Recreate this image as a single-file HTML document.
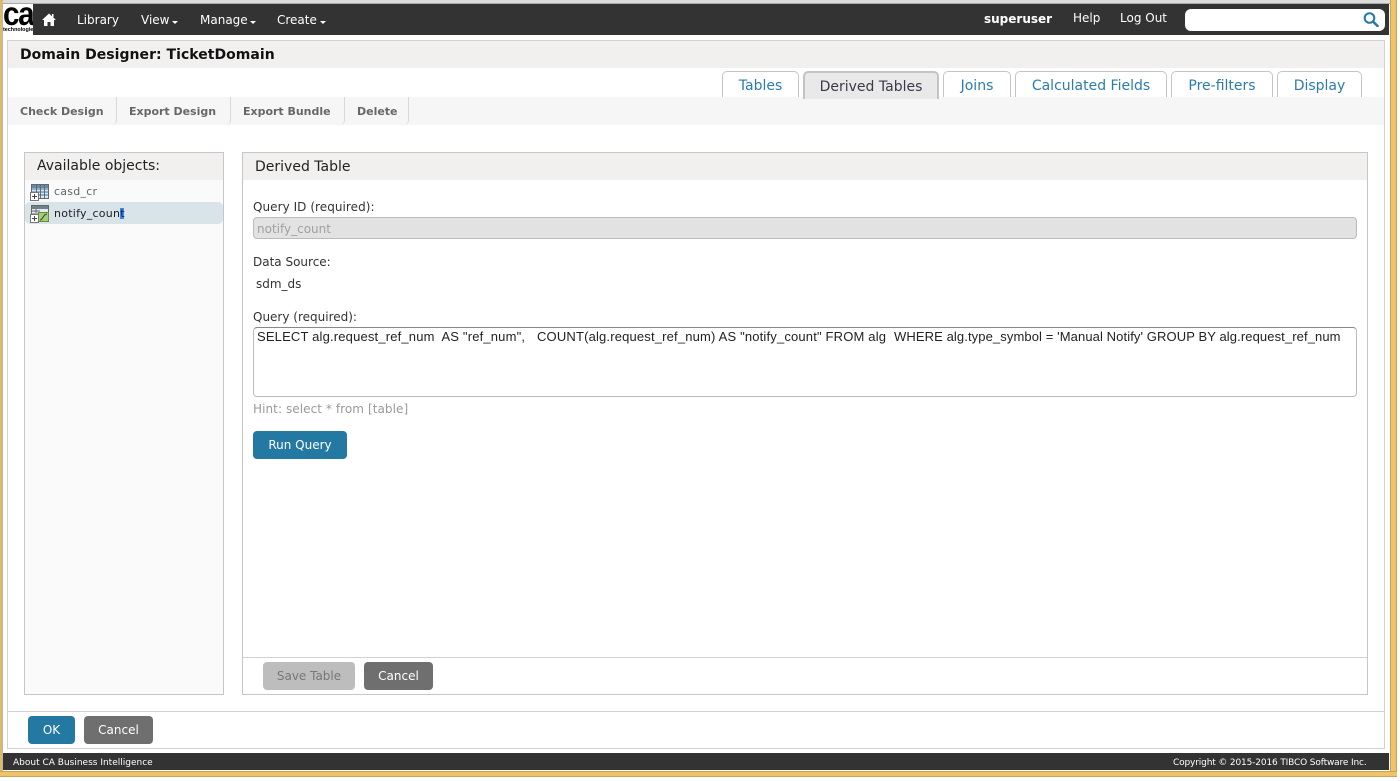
<!DOCTYPE html>
<html><head><meta charset="utf-8"><title>Domain Designer</title>
<style>
html,body{margin:0;padding:0;background:#fff}
#p{position:relative;width:1400px;height:781px;overflow:hidden;background:#fff;font-family:"Liberation Sans",sans-serif}
#p div,#p span.t{position:absolute;box-sizing:border-box}
.t{position:absolute;white-space:pre;line-height:16px}
.n{color:#fff;top:12px;font-family:"DejaVu Sans",sans-serif;font-size:12px}
.v{font-family:"DejaVu Sans",sans-serif}
.tab{top:71px;height:26px;background:#fff;border:1px solid #c4c4c4;border-bottom:0;border-radius:5px 5px 0 0;color:#2b7cab;font:14px/28px "DejaVu Sans",sans-serif;text-align:center;white-space:pre}
.tb{top:97px;height:28px;border-right:1px solid #d8d8d8;border-radius:0 0 5px 0}
.tbt{top:104px;color:#6b6666;font:bold 11px/16px "DejaVu Sans",sans-serif;letter-spacing:-.01px}
.lb{color:#333;font:12px/16px "DejaVu Sans",sans-serif}
.q{top:329px;font-size:13px;letter-spacing:.17px;color:#222}
.btn{height:28px;border-radius:4px;color:#fff;font:12px/28px "DejaVu Sans",sans-serif;text-align:center}
.arr{width:0;height:0;border:3px solid transparent;border-top:3px solid #fff;border-bottom:0}
</style></head><body><div id="p">
<!-- window frame -->
<div style="left:0;top:0;width:3px;height:772px;background:#e2b862"></div>
<div style="left:2px;top:3px;width:1px;height:768px;background:#b8b8b8"></div>
<div style="left:1390px;top:0;width:7px;height:777px;background:#efc369;border-left:1px solid #c9a458;border-right:1px solid #c9a458"></div>
<div style="left:0;top:771px;width:1397px;height:6px;background:#efc369;border-top:1px solid #c9a458;border-bottom:1px solid #c9a458"></div>
<div style="left:3px;top:0;width:1387px;height:4px;background:#dcdcdc;border-bottom:1px solid #aaa"></div>
<!-- top bar -->
<div style="left:33px;top:4px;width:1356px;height:31px;background:#333"></div>
<div style="left:3px;top:4px;width:30px;height:31px;background:#fff;overflow:hidden">
<span class="t" style="left:0;top:-5px;font:bold 33px/30px 'Liberation Sans',sans-serif;letter-spacing:-1.500px;color:#000;transform:scaleX(.9);transform-origin:0 0">ca</span>
<span class="t" style="left:0;top:22px;font:bold 5.400px/8px 'Liberation Sans',sans-serif;color:#000">technologies</span>
</div>
<svg style="position:absolute;left:42px;top:13px" width="14" height="13" viewBox="0 0 14 13"><path d="M7 0.5L0 7h2v6h3.5V9h3v4H12V7h2L11.5 4.7V1H10v2.3z" fill="#fff"/></svg>
<span class="t n" style="left:77px">Library</span>
<span class="t n" style="left:141px">View</span><div class="arr" style="left:172px;top:21px"></div>
<span class="t n" style="left:200px">Manage</span><div class="arr" style="left:250px;top:21px"></div>
<span class="t n" style="left:277px">Create</span><div class="arr" style="left:320px;top:21px"></div>
<span class="t" style="left:984px;top:11px;color:#fff;font:bold 12px/16px 'DejaVu Sans',sans-serif">superuser</span>
<span class="t n" style="left:1073px;top:10px">Help</span>
<span class="t n" style="left:1120px;top:10px">Log Out</span>
<div style="left:1185px;top:9px;width:200px;height:22px;background:#fff;border-radius:6px"></div>
<svg style="position:absolute;left:1363px;top:12px" width="16" height="15" viewBox="0 0 16 15"><circle cx="6.500" cy="6" r="4.800" fill="none" stroke="#2479a8" stroke-width="2"/><path d="M10 9.500L14.500 14" stroke="#2479a8" stroke-width="2.600" stroke-linecap="round"/></svg>
<!-- main panel -->
<div style="left:7px;top:40px;width:1378px;height:709px;border:1px solid #d2d2d2;background:#fff"></div>
<div style="left:8px;top:41px;width:1376px;height:27px;background:#f1f0ef"></div>
<span class="t" style="left:20px;top:47px;color:#111;font:bold 14px/16px 'DejaVu Sans',sans-serif;letter-spacing:.03px">Domain Designer: TicketDomain</span>
<!-- toolbar -->
<div style="left:8px;top:97px;width:1376px;height:28px;background:#f6f6f6"></div>
<div class="tb" style="left:8px;width:109px"></div>
<div class="tb" style="left:117px;width:114px"></div>
<div class="tb" style="left:231px;width:114px"></div>
<div class="tb" style="left:345px;width:64px"></div>
<span class="t tbt" style="left:20px">Check Design</span>
<span class="t tbt" style="left:129px">Export Design</span>
<span class="t tbt" style="left:243px">Export Bundle</span>
<span class="t tbt" style="left:357px">Delete</span>
<!-- tabs -->
<div class="tab" style="left:722px;width:77px">Tables</div>
<div class="tab" style="left:803px;width:136px;height:28px;background:#e9e9e9;border:2px solid #c4c4c4;border-bottom:0;color:#3a3a4a;line-height:28px">Derived Tables</div>
<div class="tab" style="left:943px;width:68px">Joins</div>
<div class="tab" style="left:1015px;width:152px">Calculated Fields</div>
<div class="tab" style="left:1171px;width:102px">Pre-filters</div>
<div class="tab" style="left:1277px;width:85px">Display</div>
<!-- left panel -->
<div style="left:24px;top:152px;width:200px;height:543px;border:1px solid #c6c6c6;background:#fafafa"></div>
<div style="left:25px;top:153px;width:198px;height:27px;background:#f1f0ef"></div>
<span class="t v" style="left:37px;top:158px;font-size:14px;color:#222">Available objects:</span>
<svg style="position:absolute;left:30px;top:184px" width="19" height="17" viewBox="0 0 19 17"><rect x="1.500" y=".5" width="17" height="14" fill="#dfe8f0" stroke="#5d6b78"/><path d="M2 1h16v3H2z" fill="#71879b"/><path d="M2 5h16M2 8h16M2 11h16M6.500 1v13M10.500 1v13M14.500 1v13" stroke="#4f6f8f" stroke-width="1"/><rect x=".5" y="8.500" width="8" height="8" fill="#fff" stroke="#777"/><path d="M2 12.500h5M4.500 10v5" stroke="#444"/></svg>
<span class="t v" style="left:54px;top:184px;font-size:11px;color:#666;letter-spacing:.25px">casd_cr</span>
<div style="left:25px;top:202px;width:198px;height:22px;background:#d9e4e8;border-radius:5px"></div>
<svg style="position:absolute;left:30px;top:205px" width="20" height="18" viewBox="0 0 20 18"><rect x="1.500" y=".5" width="17" height="16" fill="#e4ebef" stroke="#5d6b60"/><path d="M2 1h16v3H2z" fill="#71808b"/><path d="M2 6h8M2 9h8M6 4v4" stroke="#667"/><rect x="8.500" y="7.500" width="10" height="9" fill="#a5cf6e" stroke="#6a8a4a"/><path d="M10 15c3 0 3-6 7-6" stroke="#245" stroke-width="1" fill="none"/><rect x=".5" y="9.500" width="8" height="8" fill="#fff" stroke="#777"/><path d="M2 13.500h5M4.500 11v5" stroke="#444"/></svg>
<div style="left:120px;top:208px;width:4px;height:11px;background:#3a86f5"></div>
<span class="t v" style="left:54px;top:206px;font-size:11px;color:#222;letter-spacing:.25px">notify_count</span>
<!-- right panel -->
<div style="left:242px;top:152px;width:1126px;height:543px;border:1px solid #c6c6c6;background:#fff"></div>
<div style="left:243px;top:153px;width:1124px;height:27px;background:#f1f0ef"></div>
<span class="t v" style="left:255px;top:159px;font-size:14px;color:#222">Derived Table</span>
<span class="t lb" style="left:253px;top:199px;letter-spacing:.05px">Query ID (required):</span>
<div style="left:253px;top:217px;width:1104px;height:22px;background:#e2e2e2;border:1px solid #bbb;border-radius:4px"></div>
<span class="t v" style="left:257px;top:221px;font-size:12px;color:#a0a0a0">notify_count</span>
<span class="t lb" style="left:253px;top:254px">Data Source:</span>
<span class="t lb" style="left:256px;top:276px">sdm_ds</span>
<span class="t lb" style="left:253px;top:309px">Query (required):</span>
<div style="left:253px;top:327px;width:1104px;height:70px;background:#fff;border:1px solid #bbb;border-top-color:#888;border-radius:4px"></div>
<span class="t q" style="left:257px">SELECT alg.request_ref_num  AS "ref_num",</span>
<span class="t q" style="left:537px">COUNT(alg.request_ref_num) AS "notify_count" FROM alg</span>
<span class="t q" style="left:894px;letter-spacing:.1px">WHERE alg.type_symbol = 'Manual Notify' GROUP BY alg.request_ref_num</span>
<span class="t v" style="left:253px;top:401px;font-size:12px;letter-spacing:.07px;color:#999">Hint: select * from [table]</span>
<div class="btn" style="left:253px;top:431px;width:94px;background:#2479a3">Run Query</div>
<div style="left:243px;top:657px;width:1124px;height:1px;background:#d2d2d2"></div>
<div class="btn" style="left:263px;top:662px;width:92px;background:#bdbdbd;color:#777">Save Table</div>
<div class="btn" style="left:364px;top:662px;width:69px;background:#6f6f6f">Cancel</div>
<!-- bottom -->
<div style="left:8px;top:711px;width:1376px;height:1px;background:#d2d2d2"></div>
<div class="btn" style="left:28px;top:716px;width:47px;background:#2479a3">OK</div>
<div class="btn" style="left:84px;top:716px;width:69px;background:#6f6f6f">Cancel</div>
<!-- footer -->
<div style="left:3px;top:753px;width:1386px;height:17px;background:#333"></div>
<span class="t v" style="left:13px;top:755px;color:#fff;font-size:9px">About CA Business Intelligence</span>
<span class="t v" style="left:1173px;top:755px;color:#fff;font-size:9px;letter-spacing:-.15px">Copyright © 2015-2016 TIBCO Software Inc.</span>
</div></body></html>
